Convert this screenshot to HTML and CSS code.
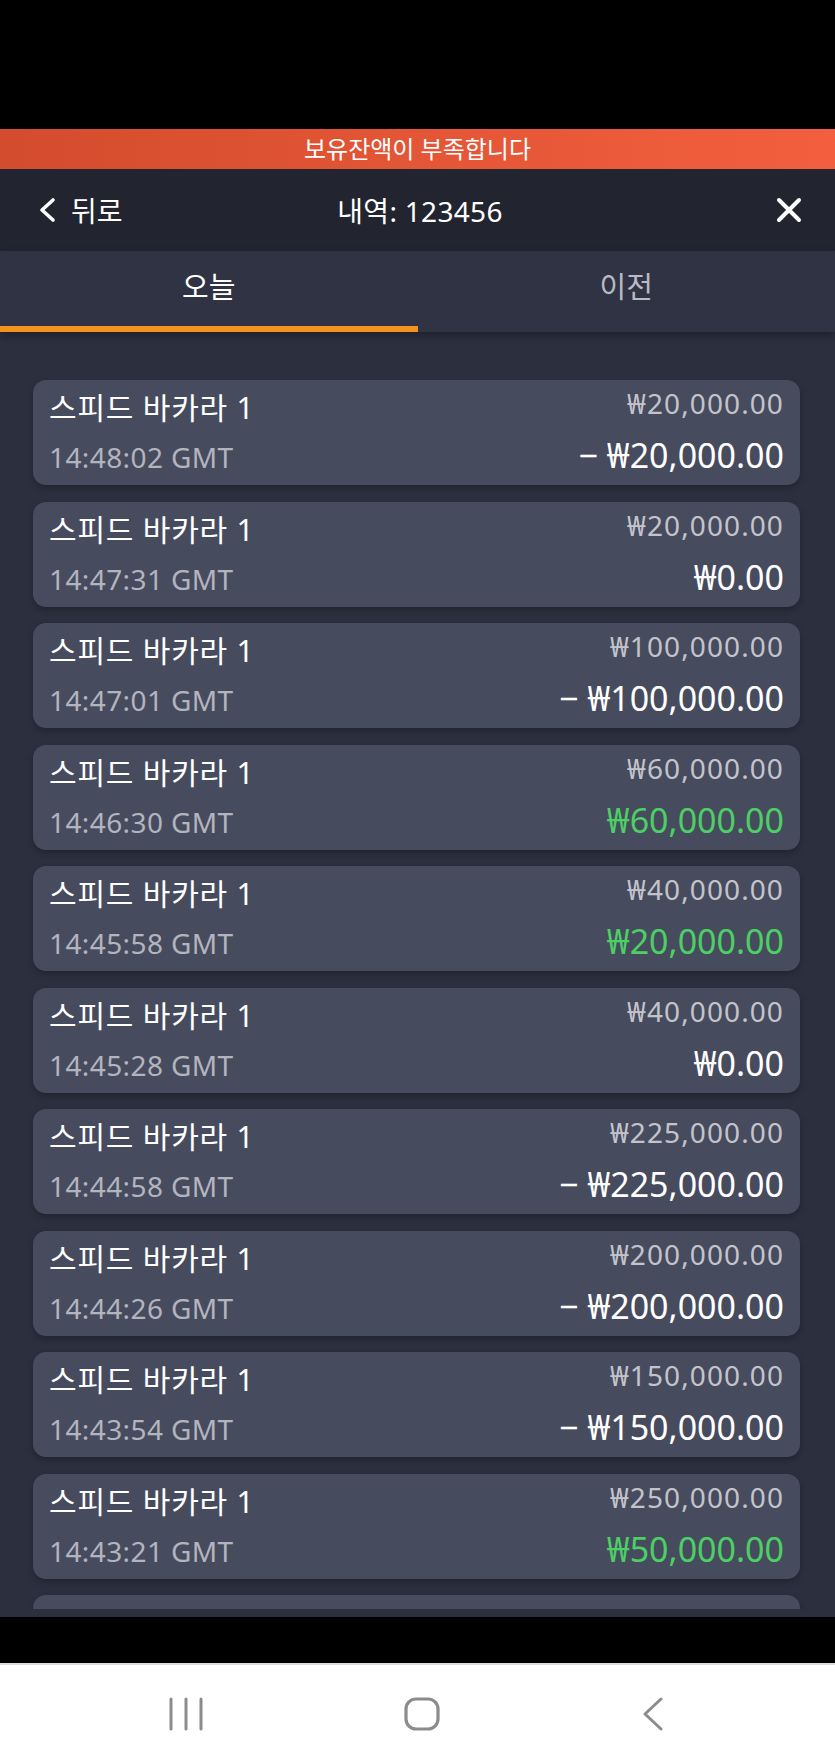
FILE: index.html
```html
<!DOCTYPE html>
<html lang="ko">
<head>
  <meta charset="UTF-8" />
  <meta name="viewport" content="width=device-width, initial-scale=1.0" />
  <title>내역</title>
  <link rel="stylesheet" href="styles.css">
</head>
<body>
  <div class="status-bar"></div>

  <div class="app">
    <div class="banner">보유잔액이 부족합니다</div>

    <header class="header">
      <a class="back" href="#">
        <svg class="back-icon" width="20" height="26" viewBox="0 0 20 26">
          <polyline points="15,3 4,13 15,23" fill="none" stroke="#fff" stroke-width="3.6" stroke-linecap="round" stroke-linejoin="round" />
        </svg>
        <span>뒤로</span>
      </a>
      <div class="title">내역: 123456</div>
      <a class="close" href="#">
        <svg width="26" height="26" viewBox="0 0 26 26">
          <path d="M3 3 L23 23 M23 3 L3 23" fill="none" stroke="#fff" stroke-width="4" stroke-linecap="round" />
        </svg>
      </a>
    </header>

    <nav class="tabs">
      <div class="tab active">오늘</div>
      <div class="tab">이전</div>
    </nav>

    <div class="list-wrap">
      <div class="list">
        <div class="card">
          <div class="row-top"><span class="game">스피드 바카라 1</span><span class="stake">₩20,000.00</span></div>
          <div class="row-bottom"><span class="time">14:48:02 GMT</span><span class="result">− ₩20,000.00</span></div>
        </div>
        <div class="card">
          <div class="row-top"><span class="game">스피드 바카라 1</span><span class="stake">₩20,000.00</span></div>
          <div class="row-bottom"><span class="time">14:47:31 GMT</span><span class="result">₩0.00</span></div>
        </div>
        <div class="card">
          <div class="row-top"><span class="game">스피드 바카라 1</span><span class="stake">₩100,000.00</span></div>
          <div class="row-bottom"><span class="time">14:47:01 GMT</span><span class="result">− ₩100,000.00</span></div>
        </div>
        <div class="card">
          <div class="row-top"><span class="game">스피드 바카라 1</span><span class="stake">₩60,000.00</span></div>
          <div class="row-bottom"><span class="time">14:46:30 GMT</span><span class="result win">₩60,000.00</span></div>
        </div>
        <div class="card">
          <div class="row-top"><span class="game">스피드 바카라 1</span><span class="stake">₩40,000.00</span></div>
          <div class="row-bottom"><span class="time">14:45:58 GMT</span><span class="result win">₩20,000.00</span></div>
        </div>
        <div class="card">
          <div class="row-top"><span class="game">스피드 바카라 1</span><span class="stake">₩40,000.00</span></div>
          <div class="row-bottom"><span class="time">14:45:28 GMT</span><span class="result">₩0.00</span></div>
        </div>
        <div class="card">
          <div class="row-top"><span class="game">스피드 바카라 1</span><span class="stake">₩225,000.00</span></div>
          <div class="row-bottom"><span class="time">14:44:58 GMT</span><span class="result">− ₩225,000.00</span></div>
        </div>
        <div class="card">
          <div class="row-top"><span class="game">스피드 바카라 1</span><span class="stake">₩200,000.00</span></div>
          <div class="row-bottom"><span class="time">14:44:26 GMT</span><span class="result">− ₩200,000.00</span></div>
        </div>
        <div class="card">
          <div class="row-top"><span class="game">스피드 바카라 1</span><span class="stake">₩150,000.00</span></div>
          <div class="row-bottom"><span class="time">14:43:54 GMT</span><span class="result">− ₩150,000.00</span></div>
        </div>
        <div class="card">
          <div class="row-top"><span class="game">스피드 바카라 1</span><span class="stake">₩250,000.00</span></div>
          <div class="row-bottom"><span class="time">14:43:21 GMT</span><span class="result win">₩50,000.00</span></div>
        </div>
        <div class="card"></div>
      </div>
    </div>
  </div>

  <div class="gesture-bar"></div>

  <div class="nav-bar">
    <svg width="34" height="34" viewBox="0 0 34 34">
      <path d="M2 2 V32 M17 2 V32 M32 2 V32" stroke="#8c8c8c" stroke-width="3" stroke-linecap="round" />
    </svg>
    <svg width="36" height="34" viewBox="0 0 36 34">
      <rect x="2" y="2" width="32" height="30" rx="10" fill="none" stroke="#8c8c8c" stroke-width="3.2" />
    </svg>
    <svg width="24" height="34" viewBox="0 0 24 34">
      <polyline points="20,2 4,17 20,32" fill="none" stroke="#8c8c8c" stroke-width="3" stroke-linecap="round" stroke-linejoin="round" />
    </svg>
  </div>
</body>
</html>
```

FILE: styles.css
```css
* {
  box-sizing: border-box;
}

body {
  margin: 0;
  width: 835px;
  height: 1763px;
  overflow: hidden;
  font-family: "Noto Sans", "Noto Sans CJK KR", sans-serif;
  background-color: #000;
  color: white;
}

.status-bar {
  height: 129px;
  background-color: #000;
}

.app {
  height: 1488px;
  display: flex;
  flex-direction: column;
  background-color: #2c2f3e;
}

.banner {
  height: 40px;
  line-height: 40px;
  text-align: center;
  font-size: 24px;
  background: linear-gradient(90deg, #d34c2d, #f35f3e);
}

.header {
  height: 82px;
  display: grid;
  grid-template-columns: 1fr auto 1fr;
  align-items: center;
  padding: 0 33px 0 38px;
  background-color: #222430;
}

.back {
  display: flex;
  align-items: center;
  gap: 13px;
  color: white;
  text-decoration: none;
  font-size: 28px;
}

.title {
  font-size: 28px;
  letter-spacing: 0.3px;
}

.close {
  justify-self: end;
  display: flex;
}

.tabs {
  height: 81px;
  display: flex;
  background-color: #303343;
  box-shadow: 0 4px 8px rgba(0, 0, 0, 0.3);
  position: relative;
  z-index: 1;
}

.tab {
  flex: 1;
  text-align: center;
  font-size: 29px;
  line-height: 72px;
  color: #b9bac3;
  position: relative;
}

.tab.active {
  color: white;
}

.tab.active::after {
  content: "";
  position: absolute;
  left: 0;
  right: 0;
  bottom: 0;
  height: 6px;
  background-color: #f5921e;
}

.list-wrap {
  flex: 1;
  min-height: 0;
  padding-bottom: 8px;
}

.list {
  height: 100%;
  overflow: hidden;
  padding: 48px 35px 0 33px;
  display: flex;
  flex-direction: column;
  gap: 16.5px;
}

.card {
  flex-shrink: 0;
  height: 105px;
  padding: 5px 16px 0 16px;
  background-color: #474b5e;
  border-radius: 13px;
  box-shadow: 0 3px 6px rgba(0, 0, 0, 0.25);
}

.row-top {
  height: 47px;
  display: flex;
  justify-content: space-between;
  align-items: flex-start;
}

.game {
  font-size: 30px;
  line-height: 46px;
  letter-spacing: 0.8px;
}

.stake {
  font-size: 28px;
  line-height: 37px;
  letter-spacing: 1.1px;
  color: #c3c4cb;
}

.row-bottom {
  height: 46px;
  display: flex;
  justify-content: space-between;
  align-items: baseline;
}

.time {
  font-size: 28px;
  line-height: 46px;
  letter-spacing: 0.4px;
  color: #b2b4be;
}

.result {
  font-size: 34px;
  line-height: 46px;
}

.result.win {
  color: #4ccf64;
}

.gesture-bar {
  height: 46px;
  background-color: #000;
}

.nav-bar {
  height: 100px;
  display: flex;
  align-items: center;
  justify-content: space-between;
  padding: 0 170px 0 169px;
  background-color: #fff;
  border-top: 2px solid #dcdcdc;
}
```
